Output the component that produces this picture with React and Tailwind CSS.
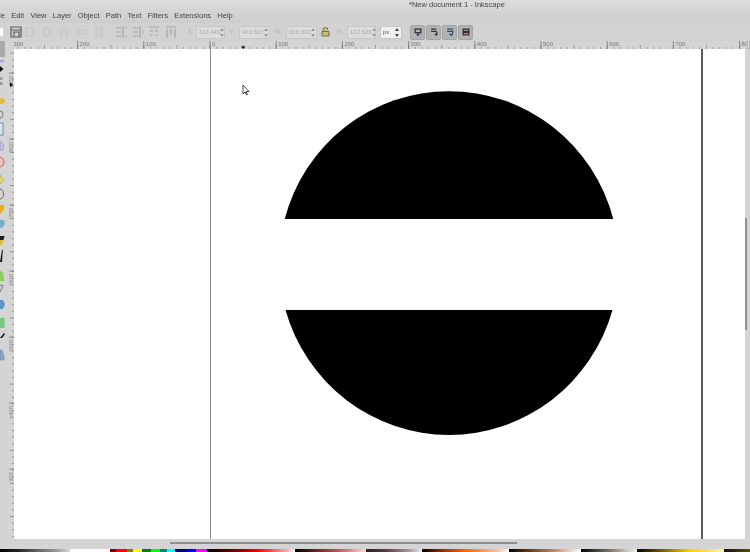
import React from 'react';

const font = { fontFamily: '"Liberation Sans", Arial, sans-serif' };

const menus = ['Edit', 'View', 'Layer', 'Object', 'Path', 'Text', 'Filters', 'Extensions', 'Help'];

const swatches = [
  { w: 70, bg: 'linear-gradient(90deg,#000 0%,#222 25%,#666 55%,#999 80%,#d8d8d8 100%)' },
  { w: 40, bg: '#ffffff' },
  { w: 97, bg: 'linear-gradient(90deg,#800000 0 6%,#ff0000 6% 18%,#808000 18% 24%,#ffff00 24% 33%,#008000 33% 42%,#00ff00 42% 52%,#008080 52% 59%,#00ffff 59% 67%,#000080 67% 79%,#0000ff 79% 89%,#ff00ff 89% 100%)' },
  { w: 88, bg: 'linear-gradient(90deg,#000,#800000 35%,#ff0000 58%,#ffb0b0 92%,#fff)' },
  { w: 71, bg: 'linear-gradient(90deg,#000,#7a2a2a 35%,#c86060 65%,#ffd8d8)' },
  { w: 56, bg: 'linear-gradient(90deg,#222,#5a3a4a 35%,#a89098 75%,#eee)' },
  { w: 87, bg: 'linear-gradient(90deg,#000,#a03000 25%,#ff6600 50%,#ffc8a0 88%,#fff)' },
  { w: 72, bg: 'linear-gradient(90deg,#000,#7a4a20 35%,#c89070 65%,#fff)' },
  { w: 56, bg: 'linear-gradient(90deg,#000,#7a7466 50%,#d8d0c0 85%,#eee)' },
  { w: 87, bg: 'linear-gradient(90deg,#000,#806000 30%,#ffcc00 60%,#fff0b0)' },
  { w: 26, bg: 'linear-gradient(90deg,#111,#5a5000)' },
];

function ToolGlyph({ d, tone = '#b4b4b4' }) {
  return (
    <svg width="14" height="14" viewBox="0 0 14 14" className="shrink-0">
      <path d={d} fill="none" stroke={tone} strokeWidth="1.2" />
    </svg>
  );
}

function Spinner({ tone = '#999' }) {
  return (
    <svg width="4" height="9" viewBox="0 0 4 9" className="shrink-0">
      <path d="M2 0l2 3H0zM2 9L0 6h4z" fill={tone} />
    </svg>
  );
}

function SpinField({ label, value, labelW, w }) {
  return (
    <div className="flex items-center">
      <span className="text-center text-[7px] text-[#b4b4b4]" style={{ width: labelW }}>{label}</span>
      <div className="flex h-[13px] items-center justify-between border border-[#c6c6c6] bg-[#dcdcdc] px-[2px] text-[6px] text-[#aaa]" style={{ width: w }}>
        <span>{value}</span>
        <Spinner />
      </div>
    </div>
  );
}

// marks every 66.2px around the page origin at x=210
function HRuler() {
  const labels = ['300', '200', '100', '0', '100', '200', '300', '400', '500', '600', '700', '800'];
  const ticks = [];
  for (let x = 210 - 29 * 6.62; x < 746; x += 6.62) ticks.push(x);
  return (
    <svg width="733" height="8" viewBox="14 0 733 8" className="block">
      {ticks.map((x, i) => (
        <line key={i} x1={x} x2={x} y1={(i + 1) % 5 === 0 ? 4 : 6} y2="8" stroke="#777" strokeWidth="0.6" />
      ))}
      {labels.map((t, i) => {
        const x = 210 + (i - 3) * 66.2;
        return (
          <g key={i}>
            <line x1={x} x2={x} y1="0" y2="8" stroke="#666" strokeWidth="0.7" />
            <text x={x + 2} y="5" fontSize="6" fill="#777" style={font}>{t}</text>
          </g>
        );
      })}
      <path d="M241 5.5h4.5l-2.25 2.5z" fill="#000" />
    </svg>
  );
}

function VRuler() {
  const ticks = [];
  for (let y = 24 - 3 * 6.62; y < 490; y += 6.62) ticks.push(y);
  const marks = ['900', '800', '700', '600', '500', '400', '300'];
  return (
    <svg width="5" height="490" viewBox="0 0 5 490" className="block">
      {ticks.map((y, i) => (
        <line key={i} x1={i % 5 === 0 ? 1 : 3} x2="5" y1={y} y2={y} stroke="#777" strokeWidth="0.7" />
      ))}
      {marks.map((t, i) => {
        const y = 24 + i * 66;
        return (
          <g key={t}>
            <line x1="0" x2="5" y1={y} y2={y} stroke="#666" strokeWidth="0.7" />
            <text transform={`translate(3.5 ${y + 13}) rotate(-90)`} fontSize="6" fill="#888" style={font}>{t}</text>
          </g>
        );
      })}
      <path d="M1 33.5v4.5l3-2.25z" fill="#000" />
    </svg>
  );
}

// the toolbox is cut off by the window edge, only the right side of each icon shows
function ToolStrip() {
  return (
    <svg width="9" height="490" viewBox="0 49 9 490" className="block">
      <rect x="0" y="49" width="5" height="8" fill="#aaaaaa" />
      <ellipse cx="1.5" cy="61" rx="3" ry="1.2" fill="#a4a4e4" />
      <path d="M0 66l3.5 3L0 72z" fill="#111" />
      <path d="M0 77h2.5v3H0zM0 82h2.5v3H0z" fill="#9a9a9a" />
      <ellipse cx="1.5" cy="101" rx="3.5" ry="2.8" fill="#e8b838" />
      <path d="M0 111a3 3.5 0 0 1 0 7" fill="none" stroke="#777" />
      <rect x="-3" y="123" width="6" height="12" fill="#dde4ee" stroke="#6f8aa8" />
      <path d="M0 141l3.5 4-.5 5H0z" fill="#c8c4f0" stroke="#9088c0" strokeWidth="0.6" />
      <circle cx="-1" cy="162" r="5" fill="#f4c0c0" stroke="#b04848" strokeWidth="0.8" />
      <path d="M0 175l3.5 5-2 3H0z" fill="#f0e078" stroke="#a89030" strokeWidth="0.6" />
      <path d="M0 189a3.5 5 0 0 1 0 10" fill="none" stroke="#666" />
      <path d="M0 205h4l.5 3-3 5H0z" fill="#e8b020" />
      <path d="M0 220h4l1 4-3 4H0z" fill="#78aec8" />
      <path d="M0 236h4.5l-1 4H0z" fill="#1c1c1c" />
      <path d="M0 240h3.5l-1 5H0z" fill="#e0c040" />
      <path d="M0 262l2-12h.8l-.8 12z" fill="#111" />
      <path d="M0 270l3 3 1.5 8H0z" fill="#8ccc5c" />
      <path d="M0 285l3 .5L0 292" fill="none" stroke="#777" />
      <path d="M0 300h3l2 4-2 5H0z" fill="#5c94c8" />
      <path d="M0 318h4.5v10H0z" fill="#74c878" />
      <path d="M0 338l4-5 1 1-3 4z" fill="#111" />
      <path d="M0 350h2l2 7v3H0z" fill="#8caac8" stroke="#5a7694" strokeWidth="0.5" />
    </svg>
  );
}

export default function App() {
  return (
    <div className="flex h-[552px] w-[750px] flex-col overflow-hidden bg-[#d4d4d4]" style={font}>
      {/* title + menu */}
      <div className="h-[23px] shrink-0 bg-gradient-to-b from-[#dcdcdc] to-[#cdcdcd] blur-[0.3px]">
        <div className="h-[9px] pl-[409px] text-[7.5px] leading-[9px] text-[#444]">*New document 1 - Inkscape</div>
        <div className="flex h-[14px] items-center gap-[6.3px] text-[7.5px] leading-[14px] text-[#444]">
          <span className="-ml-[1px]">le</span>
          {menus.map((m) => <span key={m}>{m}</span>)}
        </div>
      </div>

      {/* commands bar */}
      <div className="flex h-[18px] shrink-0 items-center bg-[#d2d2d2] blur-[0.4px]">
        <div className="h-[8px] w-[3px] bg-white" />
        <div className="ml-[6px]"><ToolGlyph tone="#5c5c5c" d="M2 2h10v10H2zM2 5h10M5 7h5v5H5z" /></div>
        <div className="ml-[-1px] flex gap-[3.5px]">
          <ToolGlyph tone="#c2c2c2" d="M4 3h6l1 2v6H4z" />
          <ToolGlyph tone="#c4c4c4" d="M4 3h6v8H4z" />
          <ToolGlyph tone="#c4c4c4" d="M4 6a3 3 0 1 1 6 0v5H4z" />
          <ToolGlyph tone="#c4c4c4" d="M2 5h10v4H2z" />
          <ToolGlyph tone="#c4c4c4" d="M4 3h6v8H4z" />
        </div>
        <div className="ml-[8px] flex gap-[2.5px]">
          <ToolGlyph tone="#a4a4a4" d="M2 3h5M2 7h5M2 11h5M9 1v12M11 3h2M11 11h2" />
          <ToolGlyph tone="#a4a4a4" d="M2 3h5M2 7h5M2 11h5M9 1v12M11 7h2" />
          <ToolGlyph tone="#a4a4a4" d="M2 2h10M3 6h3M8 6h3M3 10h3M8 10h3" />
          <ToolGlyph tone="#a4a4a4" d="M2 2h10M3 4v9M7 4v6M11 4v9" />
        </div>
        <div className="ml-[7.5px] flex items-center">
          <SpinField label="X:" value="112.449" labelW={11} w={29} />
          <SpinField label="Y:" value="410.501" labelW={14} w={31} />
          <SpinField label="W:" value="606.803" labelW={16} w={31} />
          <div className="flex w-[16px] justify-center">
            <svg width="9" height="10" viewBox="0 0 9 10">
              <path d="M2 4.5V3a2.5 2.5 0 0 1 5 0M1 4.5h7V9H1z" fill="#c8c070" stroke="#6a6a30" strokeWidth="0.9" />
            </svg>
          </div>
          <SpinField label="H:" value="122.626" labelW={14} w={29} />
        </div>
        <div className="ml-[4px] flex h-[13px] w-[22px] items-center justify-between border border-[#c6c6c6] bg-[#f0f0f0] px-[2px] text-[6px] text-[#555]">
          <span>px</span>
          <Spinner tone="#444" />
        </div>
        <div className="ml-[8px] flex gap-[1px]">
          {[
            ['M3 3h8v5H3zM7 8v3M5 11h4', '#2c3440'],
            ['M3 3h7M3 6h7l1 2v3M8 10l3 2', '#2c3440'],
            ['M3 3h8M3 6h8l-1 5M6 10l4 2', '#24506c'],
            ['M3 3h8v3H3zM3 8h8v3H3z', '#3c2c30'],
          ].map(([d, tone]) => (
            <div key={d} className="flex h-[15px] w-[15px] items-center justify-center rounded-[2px] border border-[#a4a4a4] bg-[#b2b2b2]">
              <svg width="10" height="10" viewBox="0 0 14 14">
                <path d={d} fill="none" stroke={tone} strokeWidth="1.8" />
              </svg>
            </div>
          ))}
        </div>
      </div>

      {/* horizontal ruler */}
      <div className="flex h-[8px] shrink-0 bg-[#d4d4d4] blur-[0.3px]">
        <div className="w-[14px] shrink-0"><div className="h-full w-[5px] bg-[#aaaaaa]" /></div>
        <HRuler />
        <div className="h-full flex-1 border border-[#b4b4b4] bg-[#e0e0e0]" />
      </div>

      {/* tools, vertical ruler, canvas, scrollbar */}
      <div className="flex h-[490px] shrink-0">
        <div className="w-[9px] shrink-0 blur-[0.3px]"><ToolStrip /></div>
        <div className="w-[5px] shrink-0 blur-[0.2px]"><VRuler /></div>
        <div className="w-[731px] shrink-0 bg-white">
          <svg width="731" height="490" viewBox="14 49 731 490" className="block">
            <line x1="210.5" x2="210.5" y1="49" y2="539" stroke="#8a8a8a" />
            <line x1="702" x2="702" y1="49" y2="539" stroke="#333" strokeWidth="1.6" />
            <path d="M284.7 219A170 172 0 0 1 613.3 219Z" fill="#000" />
            <path d="M285.5 310A170 172 0 0 0 612.5 310Z" fill="#000" />
            <path d="M243 85v9l2-2 1.5 3 1-.5-1.5-3h3z" fill="#fff" stroke="#333" strokeWidth="0.9" />
          </svg>
        </div>
        <div className="w-[5px] shrink-0 pt-[169px]">
          <div className="h-[112px] w-[2px] bg-[#909090]" />
        </div>
      </div>

      {/* horizontal scrollbar */}
      <div className="h-[10px] shrink-0 pl-[170px] pt-[3px]">
        <div className="h-[2px] w-[347px] bg-[#909090]" />
      </div>

      {/* palette */}
      <div className="flex h-[3px] shrink-0">
        {swatches.map((s, i) => (
          <div key={i} className="h-full shrink-0" style={{ width: s.w, background: s.bg }} />
        ))}
      </div>
    </div>
  );
}
